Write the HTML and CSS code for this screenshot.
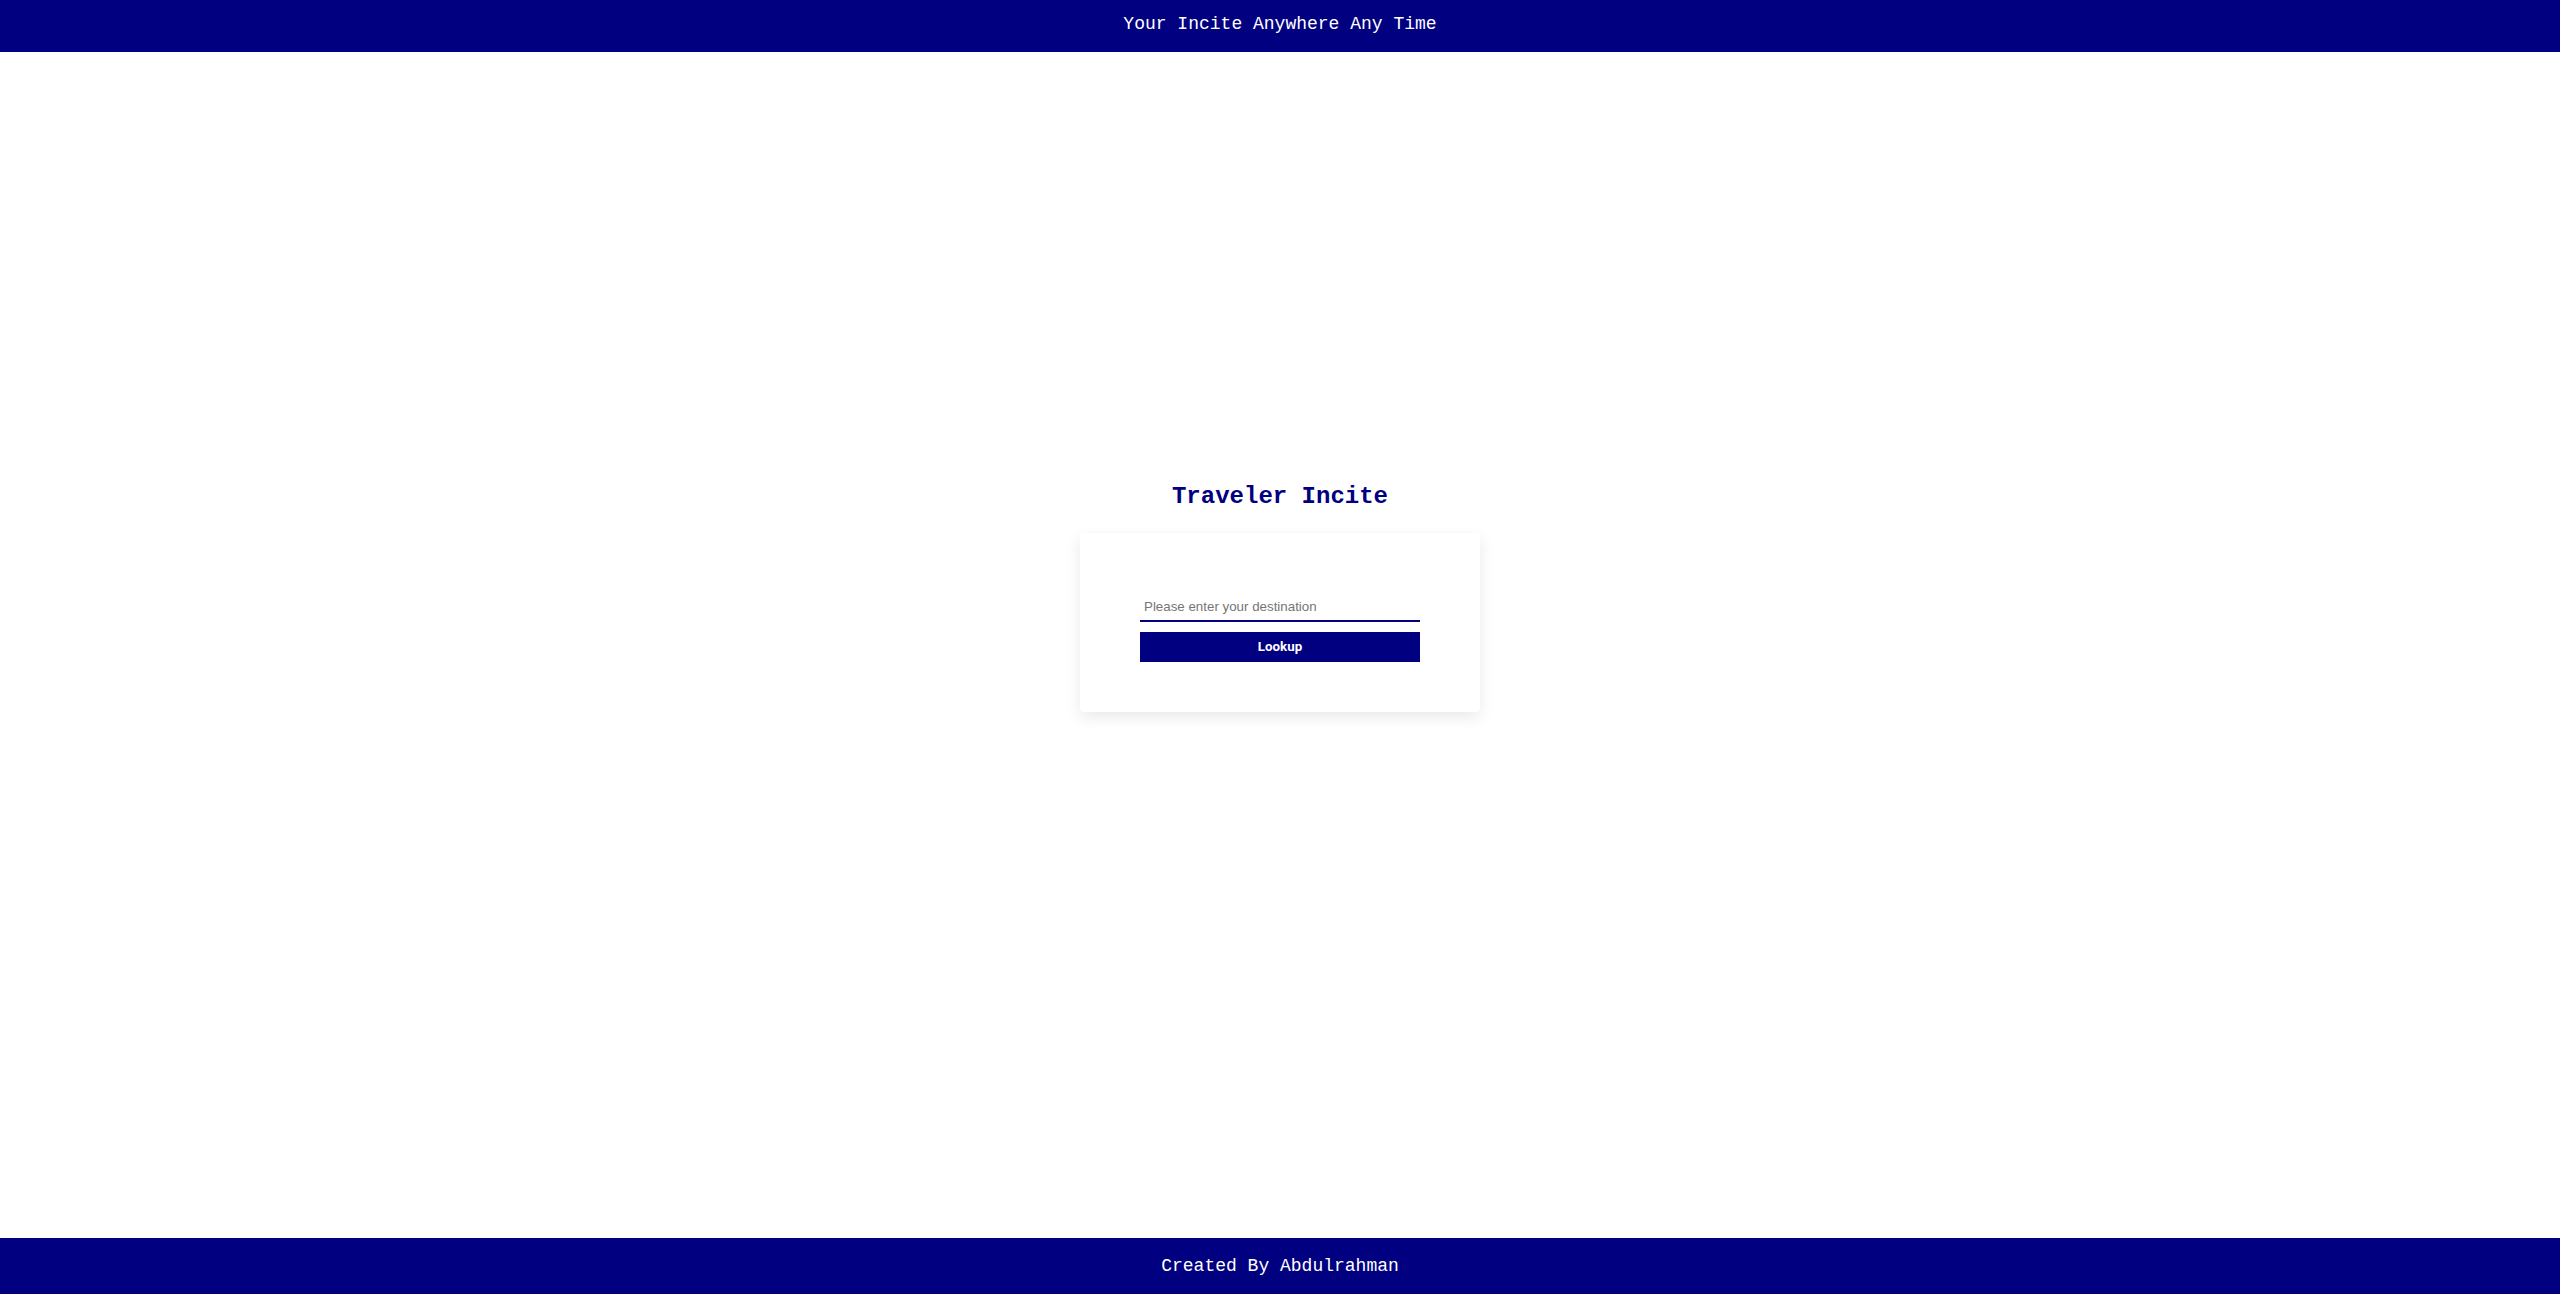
FILE: index.html
```html
<!DOCTYPE html>
<html lang="en">
<head>
<meta charset="utf-8">
<title>Traveler Incite</title>
<link rel="stylesheet" href="styles.css">
</head>
<body>
  <header class="top-bar">Your Incite Anywhere Any Time</header>
  <main class="main">
    <h1 class="title">Traveler Incite</h1>
    <div class="card">
      <form class="lookup-form">
        <input class="destination" type="text" placeholder="Please enter your destination">
        <button class="lookup-btn" type="button">Lookup</button>
      </form>
    </div>
  </main>
  <footer class="bottom-bar">Created By Abdulrahman</footer>
</body>
</html>
```

FILE: styles.css
```css
* { box-sizing: border-box; }

html, body {
  margin: 0;
  padding: 0;
}

body {
  min-height: 100vh;
  display: flex;
  flex-direction: column;
  background: #ffffff;
  font-family: "Liberation Mono", monospace;
}

.top-bar {
  height: 52px;
  padding-top: 14px;
  background: #000080;
  color: #ffffff;
  font-size: 18px;
  text-align: center;
}

.main {
  flex: 1;
  display: flex;
  flex-direction: column;
  align-items: center;
  justify-content: center;
  padding-bottom: 95px;
}

.title {
  margin: 0 0 23px;
  font-family: "Liberation Mono", monospace;
  font-size: 24px;
  font-weight: bold;
  color: #000080;
}

.card {
  width: 400px;
  padding: 50px 60px;
  background: #ffffff;
  border-radius: 4px;
  box-shadow: 0 5px 15px rgba(0, 0, 0, 0.09);
}

.lookup-form {
  display: flex;
  flex-direction: column;
  gap: 10px;
}

.destination {
  width: 280px;
  height: 39px;
  margin: 0;
  padding: 16px 4px 6px;
  border: none;
  border-bottom: 2px solid #000080;
  outline: none;
  font-family: "Liberation Sans", Arial, sans-serif;
  font-size: 13.33px;
  line-height: 15px;
  color: #222;
  background: transparent;
}

.destination::placeholder {
  color: #757575;
}

.lookup-btn {
  width: 280px;
  height: 30px;
  margin: 0;
  padding: 0 0 2px;
  border: none;
  background: #000080;
  color: #ffffff;
  font-family: Roboto, "Liberation Sans", sans-serif;
  font-size: 13.33px;
  font-weight: bold;
  cursor: pointer;
}

.bottom-bar {
  height: 56px;
  padding-top: 18px;
  background: #000080;
  color: #ffffff;
  font-size: 18px;
  text-align: center;
}
```
